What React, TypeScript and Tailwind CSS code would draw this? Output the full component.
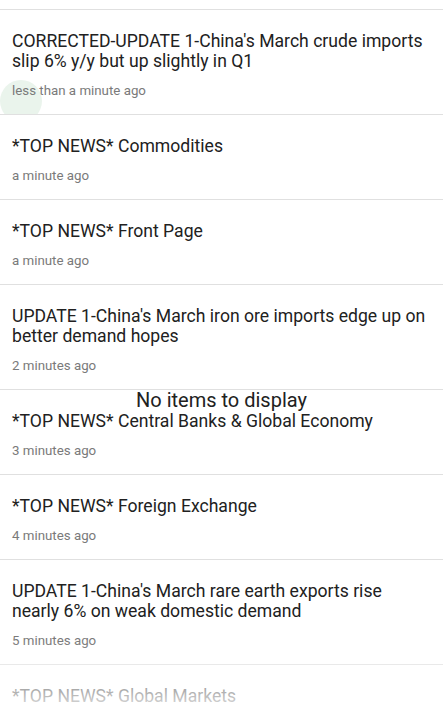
import React from 'react';

type NewsItem = {
  title: string;
  time: string;
};

const items: NewsItem[] = [
  { title: "CORRECTED-UPDATE 1-China's March crude imports slip 6% y/y but up slightly in Q1", time: 'less than a minute ago' },
  { title: '*TOP NEWS* Commodities', time: 'a minute ago' },
  { title: '*TOP NEWS* Front Page', time: 'a minute ago' },
  { title: "UPDATE 1-China's March iron ore imports edge up on better demand hopes", time: '2 minutes ago' },
  { title: '*TOP NEWS* Central Banks & Global Economy', time: '3 minutes ago' },
  { title: '*TOP NEWS* Foreign Exchange', time: '4 minutes ago' },
  { title: "UPDATE 1-China's March rare earth exports rise nearly 6% on weak domestic demand", time: '5 minutes ago' },
  { title: '*TOP NEWS* Global Markets', time: '6 minutes ago' },
];

function NewsRow({ item, pressed }: { item: NewsItem; pressed?: boolean }) {
  return (
    <div className="relative border-t border-[#e0e0e0] px-3 pt-[21px] pb-[15px] overflow-hidden">
      {pressed && (
        // ripple left over from the tap
        <div className="absolute left-[0px] top-[70px] w-[42px] h-[42px] rounded-full bg-[#eaf4ec]" />
      )}
      <p className="relative text-[17.6px] leading-[20px] text-[#212121]">{item.title}</p>
      <p className="relative mt-[11px] text-[13.3px] leading-[17px] text-[#7a7a7a]">{item.time}</p>
    </div>
  );
}

export default function App() {
  return (
    <div
      className="relative h-[720px] w-[443px] overflow-hidden bg-white"
      style={{ fontFamily: 'Roboto, "Noto Sans", sans-serif' }}
    >
      <div className="h-[9px]" />
      {items.map((item, i) => (
        <NewsRow key={i} item={item} pressed={i === 0} />
      ))}

      <div className="absolute left-0 right-0 top-[388px] text-center text-[20px] leading-[24px] text-[#212121]">
        No items to display
      </div>

      <div className="absolute bottom-0 left-0 right-0 h-[80px] bg-gradient-to-b from-white/0 to-white" />
    </div>
  );
}
